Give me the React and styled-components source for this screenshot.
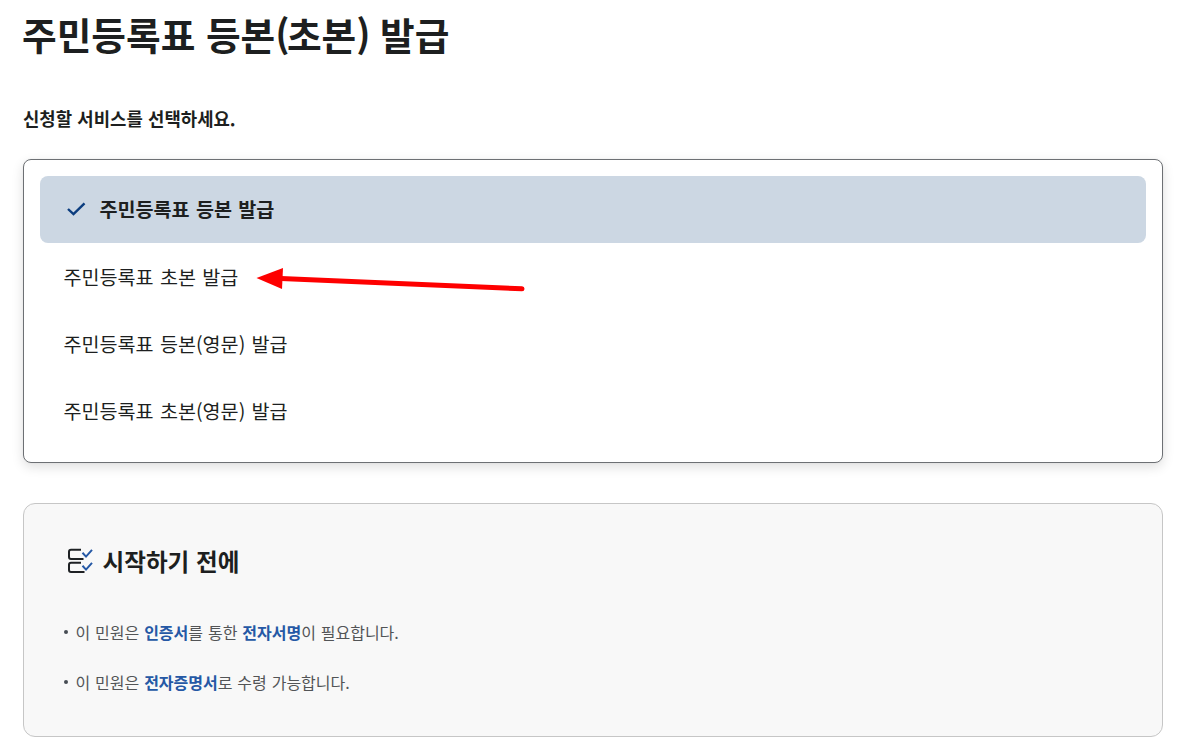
import React, { useState } from 'react';
import styled, { createGlobalStyle, css } from 'styled-components';

const GlobalStyle = createGlobalStyle`
  *,
  *::before,
  *::after {
    box-sizing: border-box;
  }
  body {
    margin: 0;
    background: #fff;
    color: #1d1f20;
    font-family: 'Noto Sans CJK KR', sans-serif;
  }
  h1, h2, p, ul {
    margin: 0;
    padding: 0;
  }
  ul {
    list-style: none;
  }
`;

const Page = styled.main`
  width: 1189px;
  height: 750px;
  padding: 6px 26px 0 23px;
  overflow: hidden;
`;

const PageTitle = styled.h1`
  margin-left: -1px;
  font-size: 37.7px;
  font-weight: 700;
  line-height: 56px;
  white-space: nowrap;
`;

const Paren = styled.span`
  letter-spacing: ${({ $tight }) => $tight}px;
`;

const Guide = styled.p`
  margin-top: 42px;
  font-size: 17.8px;
  font-weight: 700;
  line-height: 28px;
  word-spacing: 0.3px;
`;

const ServiceList = styled.ul`
  height: 304px;
  margin-top: 27px;
  padding: 16px;
  border: 1px solid #6d7074;
  border-radius: 8px;
  background: #fff;
  box-shadow: 0 0 2px rgba(0, 0, 0, 0.05), 0 4px 12px rgba(0, 0, 0, 0.13);
`;

const ServiceItem = styled.li`
  display: flex;
  align-items: center;
  height: 67.45px;
  padding: 0 24px 1.3px 23.5px;
  border-radius: 8px;
  font-size: 19.6px;
  line-height: 30px;
  word-spacing: 0.8px;
  cursor: pointer;
  ${({ $selected }) =>
    $selected &&
    css`
      background: #ccd7e3;
      font-weight: 700;
    `}
`;

const CheckIcon = styled.svg`
  flex: none;
  width: 24px;
  height: 24px;
  margin-right: 12px;
`;

const Arrow = styled.svg`
  flex: none;
  width: 270px;
  height: 26px;
  margin: 5px 0 0 17.9px;
`;

const InfoBox = styled.section`
  height: 234px;
  margin-top: 40px;
  padding: 39px 40px;
  border: 1px solid #c6c6c6;
  border-radius: 12px;
  background: #f8f8f8;
`;

const InfoTitle = styled.h2`
  display: flex;
  align-items: center;
  font-size: 23.6px;
  font-weight: 700;
  line-height: 36px;
`;

const InfoIcon = styled.svg`
  flex: none;
  width: 32px;
  height: 32px;
  margin-right: 6.5px;
`;

const InfoList = styled.ul`
  display: grid;
  gap: 26px;
  margin-top: 41px;
`;

const InfoItem = styled.li`
  display: flex;
  align-items: center;
  color: #525456;
  font-size: 16px;
  line-height: 24px;
  word-spacing: 0.4px;

  &::before {
    content: '';
    flex: none;
    width: 4px;
    height: 4px;
    margin-right: 7.5px;
    border-radius: 50%;
    background: #464c53;
  }
`;

const Strong = styled.strong`
  color: #2558a5;
  font-weight: 700;
`;

const services = [
  { id: 'copy', name: '주민등록표 등본 발급' },
  { id: 'abstract', name: '주민등록표 초본 발급', pointed: true },
  { id: 'copyEn', name: '주민등록표 등본(영문) 발급' },
  { id: 'abstractEn', name: '주민등록표 초본(영문) 발급' },
];

const PointerArrow = () => (
  <Arrow viewBox="0 0 270 26" fill="none">
    <path d="M25 12.4L266 22.8" stroke="#fe0000" strokeWidth="5" strokeLinecap="round" />
    <path d="M.5 12L27 2L26 23Z" fill="#fe0000" />
  </Arrow>
);

const App = () => {
  const [selected, setSelected] = useState('copy');

  return (
    <>
      <GlobalStyle />
      <Page lang="ko">
        <PageTitle>
          주민등록표 등본<Paren $tight={-2.6}>(</Paren>초본
          <Paren $tight={-1}>)</Paren> 발급
        </PageTitle>
        <Guide>신청할 서비스를 선택하세요.</Guide>
        <ServiceList>
          {services.map((item) => (
            <ServiceItem
              key={item.id}
              $selected={item.id === selected}
              onClick={() => setSelected(item.id)}
            >
              {item.id === selected && (
                <CheckIcon viewBox="0 0 24 24" fill="none">
                  <path d="M4 12L9.5 17.2L20.5 6.4" stroke="#0b3d7f" strokeWidth="2.4" />
                </CheckIcon>
              )}
              {item.name}
              {item.pointed && <PointerArrow />}
            </ServiceItem>
          ))}
        </ServiceList>
        <InfoBox>
          <InfoTitle>
            <InfoIcon viewBox="0 0 32 32" fill="none" strokeWidth="2">
              <path d="M17 4.7H7Q5 4.7 5 6.7V12Q5 14 7 14H19.5" stroke="#1e2124" />
              <path d="M17 17.7H7Q5 17.7 5 19.7V25Q5 27 7 27H20.5" stroke="#1e2124" />
              <path d="M18.5 7.8L22 11.6L28 4.8M18.5 20.8L22 24.6L28 17.8" stroke="#2558a5" />
            </InfoIcon>
            시작하기 전에
          </InfoTitle>
          <InfoList>
            <InfoItem>
              <p>
                이 민원은 <Strong>인증서</Strong>를 통한 <Strong>전자서명</Strong>이 필요합니다.
              </p>
            </InfoItem>
            <InfoItem>
              <p>
                이 민원은 <Strong>전자증명서</Strong>로 수령 가능합니다.
              </p>
            </InfoItem>
          </InfoList>
        </InfoBox>
      </Page>
    </>
  );
};

export default App;
